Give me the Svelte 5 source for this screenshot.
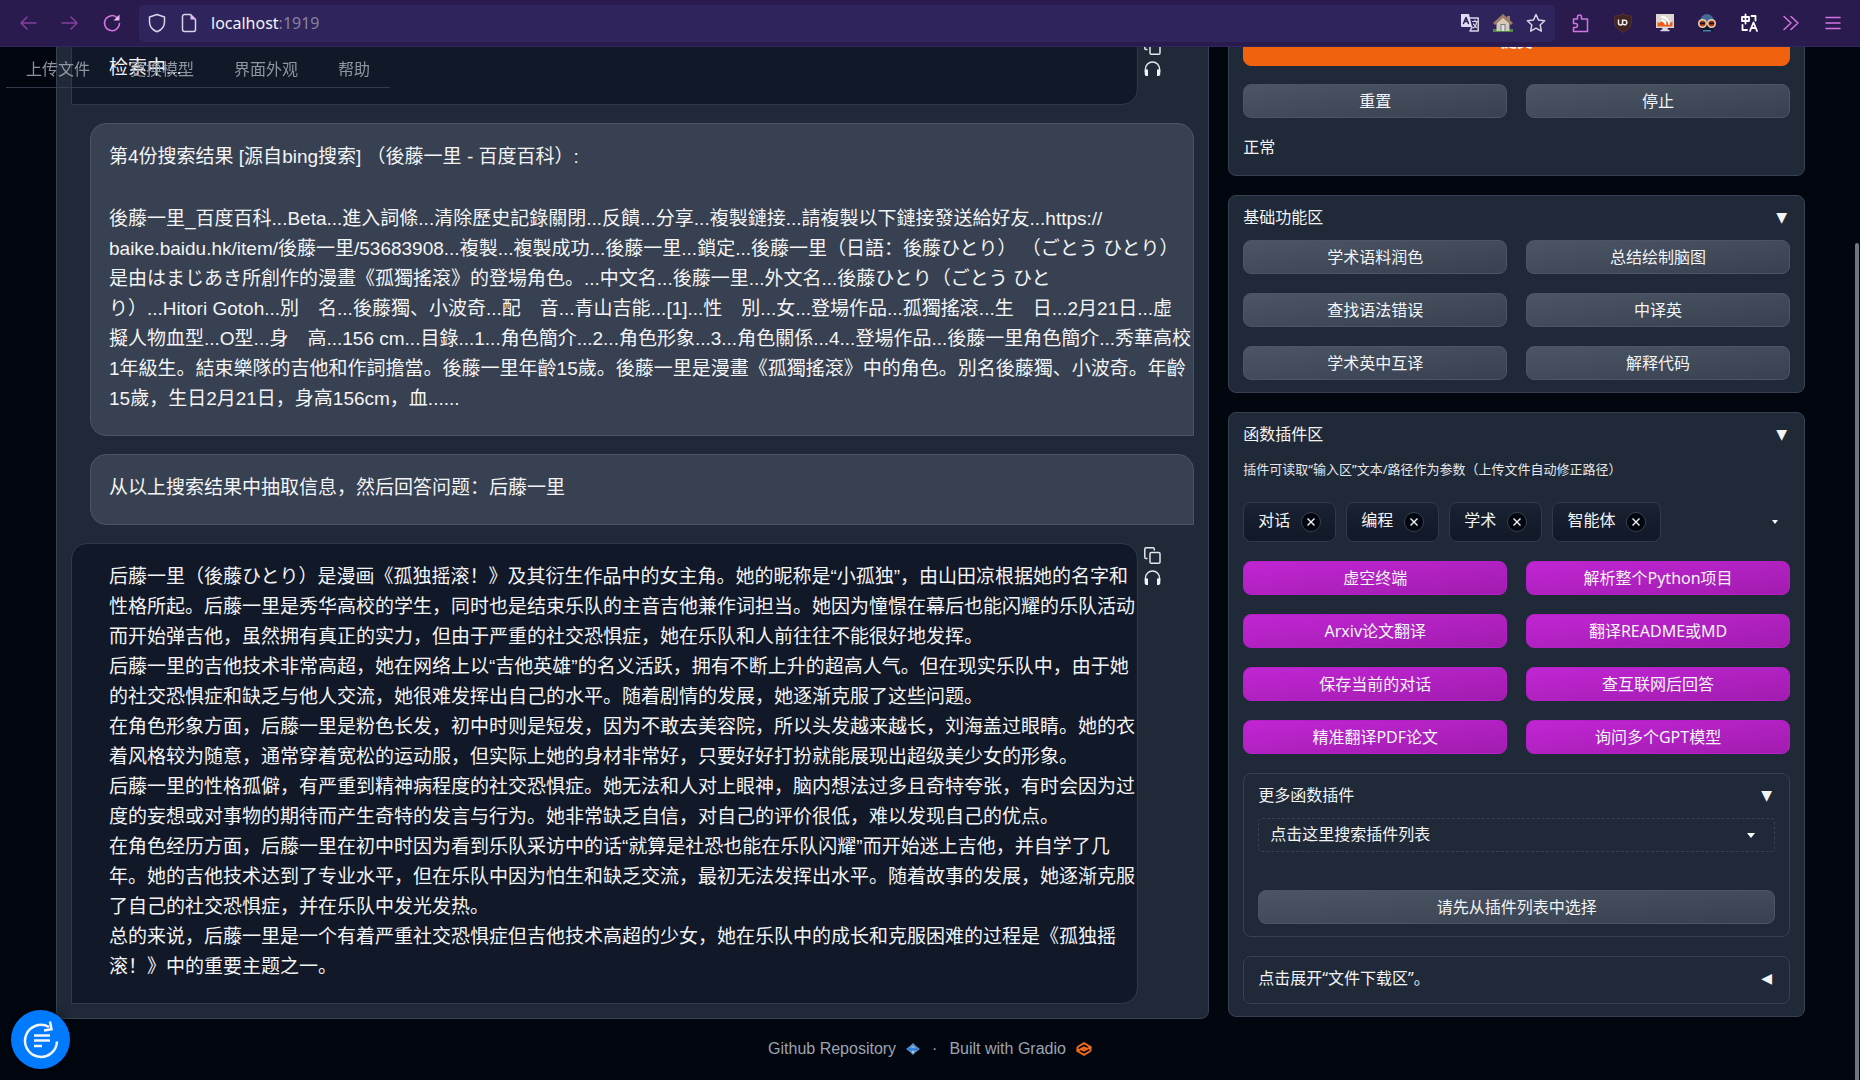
<script lang="ts">
  type Message = { role: 'user' | 'bot'; paragraphs: string[] };

  const tabs = ['上传文件', '更换模型', '界面外观', '帮助'];

  const messages: Message[] = [
    { role: 'bot', paragraphs: ['检索中...'] },
    {
      role: 'user',
      paragraphs: [
        '第4份搜索结果 [源自bing搜索] （後藤一里 - 百度百科）:',
        `後藤一里_百度百科...Beta...進入詞條...清除歷史記錄關閉...反饋...分享...複製鏈接...請複製以下鏈接發送給好友...https://
baike.baidu.hk/item/後藤一里/53683908...複製...複製成功...後藤一里...鎖定...後藤一里（日語：後藤ひとり） （ごとう ひとり）
是由はまじあき所創作的漫畫《孤獨搖滾》的登場角色。...中文名...後藤一里...外文名...後藤ひとり（ごとう ひと
り）...Hitori Gotoh...別　名...後藤獨、小波奇...配　音...青山吉能...[1]...性　別...女...登場作品...孤獨搖滾...生　日...2月21日...虛
擬人物血型...O型...身　高...156 cm...目錄...1...角色簡介...2...角色形象...3...角色關係...4...登場作品...後藤一里角色簡介...秀華高校
1年級生。結束樂隊的吉他和作詞擔當。後藤一里年齡15歲。後藤一里是漫畫《孤獨搖滾》中的角色。別名後藤獨、小波奇。年齡
15歲，生日2月21日，身高156cm，血......`,
      ],
    },
    { role: 'user', paragraphs: ['从以上搜索结果中抽取信息，然后回答问题：后藤一里'] },
    {
      role: 'bot',
      paragraphs: [
        `后藤一里（後藤ひとり）是漫画《孤独摇滚！》及其衍生作品中的女主角。她的昵称是“小孤独”，由山田凉根据她的名字和
性格所起。后藤一里是秀华高校的学生，同时也是结束乐队的主音吉他兼作词担当。她因为憧憬在幕后也能闪耀的乐队活动
而开始弹吉他，虽然拥有真正的实力，但由于严重的社交恐惧症，她在乐队和人前往往不能很好地发挥。
后藤一里的吉他技术非常高超，她在网络上以“吉他英雄”的名义活跃，拥有不断上升的超高人气。但在现实乐队中，由于她
的社交恐惧症和缺乏与他人交流，她很难发挥出自己的水平。随着剧情的发展，她逐渐克服了这些问题。
在角色形象方面，后藤一里是粉色长发，初中时则是短发，因为不敢去美容院，所以头发越来越长，刘海盖过眼睛。她的衣
着风格较为随意，通常穿着宽松的运动服，但实际上她的身材非常好，只要好好打扮就能展现出超级美少女的形象。
后藤一里的性格孤僻，有严重到精神病程度的社交恐惧症。她无法和人对上眼神，脑内想法过多且奇特夸张，有时会因为过
度的妄想或对事物的期待而产生奇特的发言与行为。她非常缺乏自信，对自己的评价很低，难以发现自己的优点。
在角色经历方面，后藤一里在初中时因为看到乐队采访中的话“就算是社恐也能在乐队闪耀”而开始迷上吉他，并自学了几
年。她的吉他技术达到了专业水平，但在乐队中因为怕生和缺乏交流，最初无法发挥出水平。随着故事的发展，她逐渐克服
了自己的社交恐惧症，并在乐队中发光发热。
总的来说，后藤一里是一个有着严重社交恐惧症但吉他技术高超的少女，她在乐队中的成长和克服困难的过程是《孤独摇
滚！》中的重要主题之一。`,
      ],
    },
  ];

  const basics = ['学术语料润色', '总结绘制脑图', '查找语法错误', '中译英', '学术英中互译', '解释代码'];
  const plugins = [
    '虚空终端', '解析整个Python项目',
    'Arxiv论文翻译', '翻译README或MD',
    '保存当前的对话', '查互联网后回答',
    '精准翻译PDF论文', '询问多个GPT模型',
  ];

  let groups = $state(['对话', '编程', '学术', '智能体']);
  let url = $state('localhost:1919');
  let search = $state('点击这里搜索插件列表');

  let host = $derived(url.split(':')[0]);
  let port = $derived(url.includes(':') ? ':' + url.split(':')[1] : '');

  function removeGroup(name: string) {
    groups = groups.filter(g => g !== name);
  }
</script>

<div class="browser">
  <div class="nav-buttons">
    <button type="button" class="chrome-btn dim" aria-label="Back">
      <svg width="20" height="20" viewBox="0 0 20 20"><path d="M18 10H3M9 4l-6 6 6 6" /></svg>
    </button>
    <button type="button" class="chrome-btn dim" aria-label="Forward">
      <svg width="20" height="20" viewBox="0 0 20 20"><path d="M2 10h15M11 4l6 6-6 6" /></svg>
    </button>
    <button type="button" class="chrome-btn bright" aria-label="Reload">
      <svg width="20" height="20" viewBox="0 0 20 20"><path d="M17.500 10.500A7.500 7.500 0 1 1 15.500 5" /><path d="M17.500 1.500v6h-6z" class="fill" /></svg>
    </button>
  </div>
  <div class="url-bar">
    <svg width="20" height="20" viewBox="0 0 20 20"><path d="M10 1.500l7.500 2.500v5c0 5-3 8-7.500 9.800C5.500 17 2.500 14 2.500 9V4z" /></svg>
    <svg class="doc" width="18" height="20" viewBox="0 0 18 20"><path d="M2.500 3.500a2 2 0 0 1 2-2h6l5 5v10a2 2 0 0 1-2 2h-9a2 2 0 0 1-2-2z" /><path d="M10.500 1.500v5h5z" class="fill" /></svg>
    <span class="address"><span>{host}</span><span class="port">{port}</span></span>
    <button type="button" class="chrome-btn" aria-label="Translate page">
      <svg width="20" height="20" viewBox="0 0 20 20"><path class="light" d="M1 1h8l3 13H2a1 1 0 0 1-1-1z" stroke="none" /><path d="M9 5h9.200v13H10l2-4" /><path class="ink" d="M3.500 10.500L6 4.500l2.500 6M4.500 8.500h3" /><path d="M12.500 8.500h5M15 7v1.500M13 15c2-1 3.500-3.500 3.500-6M13.500 11l3 3.500" stroke-width="1.200" /></svg>
    </button>
    <button type="button" class="chrome-btn" aria-label="Home">
      <svg width="20" height="20" viewBox="0 0 20 20" stroke="none"><path fill="#4f8a45" d="M0 16h20v3H0z" /><path fill="#d6cbb8" d="M3.500 9L10 3l6.500 6v9h-13z" /><path fill="#9c7b68" d="M10 1L0 10l2 2 8-7 8 7 2-2-3-2.700V3h-3v1.500z" /><path fill="#77777f" d="M7.500 11h5v7h-5z" /><path fill="#dfe2e5" d="M8.500 12h3v6h-3z" /></svg>
    </button>
    <button type="button" class="chrome-btn" aria-label="Bookmark">
      <svg width="20" height="20" viewBox="0 0 20 20"><path d="M10 1.500l2.600 5.600 6 .7-4.400 4.200 1.100 6.200-5.300-3-5.300 3 1.100-6.200L1.400 7.800l6-.7z" /></svg>
    </button>
  </div>
  <div class="extensions">
    <button type="button" class="chrome-btn bright" aria-label="Extensions">
      <svg width="20" height="20" viewBox="0 0 20 20"><path d="M2.500 6h4V4a2 2 0 0 1 4 0v2h6v12.500h-14v-4h2a2 2 0 0 0 0-4h-2z" /></svg>
    </button>
    <button type="button" class="chrome-btn" aria-label="uBlock">
      <svg width="20" height="20" viewBox="0 0 20 20"><path d="M10 .8c3 1.700 5 2.200 8.300 2.200v7c0 4.500-4 7-8.300 9.300C5.700 17 1.700 14.500 1.700 10V3C5 3 7 2.500 10 .8z" fill="#3f241f" stroke="#55323c" stroke-width="1" /><path d="M5.500 7v3a2 2 0 0 0 4 0V7m0 1.500a2.300 2.300 0 1 1 0 2" stroke="#eee" /></svg>
    </button>
    <button type="button" class="chrome-btn" aria-label="Feeds">
      <svg width="20" height="20" viewBox="0 0 20 20"><path d="M1 1h18v14H1z" fill="#dcd6cf" stroke="none" /><path d="M2.500 9v4.500h15V8l-2 2-3-2-3 3-3-3-2 2z" fill="#ee5a18" class="bare" /><path d="M7 4a7 7 0 0 1 7 7M7 7.500a3.500 3.500 0 0 1 3.500 3.500" class="white" /><path d="M8 15h4v2.500H8zM6 17.500h8" fill="#ddd" /></svg>
    </button>
    <button type="button" class="chrome-btn" aria-label="User scripts">
      <svg width="20" height="20" viewBox="0 0 20 20" stroke="none"><path d="M3 9a7 8 0 0 1 14 0z" fill="#446a98" /><path d="M3 10h14l-1 8.500H4z" fill="#101a2c" /><circle cx="5.500" cy="10.500" r="4.500" fill="#e8d4b8" /><circle cx="14.500" cy="10.500" r="4.500" fill="#e8d4b8" /><circle cx="5.500" cy="10.500" r="3" fill="#b53a12" /><circle cx="14.500" cy="10.500" r="3" fill="#b53a12" /><path d="M3 9.500h5v1.800H3zM12 9.500h5v1.800h-5z" fill="#15151f" /><path d="M6 17h8v1.500H6z" fill="#4b80ad" /></svg>
    </button>
    <button type="button" class="chrome-btn" aria-label="Translate">
      <svg width="20" height="20" viewBox="0 0 20 20"><path d="M3 4h7v4H3zM6.500 1.500v9M12.500 3h4v4.500M3.500 12v5H8M11 18l3.500-8.500L18 18M12.200 15h4.600" class="white" /></svg>
    </button>
    <button type="button" class="chrome-btn bright" aria-label="More tools">
      <svg width="20" height="20" viewBox="0 0 20 20"><path d="M3 3.500l7 6.500-7 6.500M10 3.500l7 6.500-7 6.500" /></svg>
    </button>
    <button type="button" class="chrome-btn bright" aria-label="Menu">
      <svg width="20" height="20" viewBox="0 0 20 20"><path d="M3 4.500h14M3 10h14M3 15.500h14" /></svg>
    </button>
  </div>
</div>

<nav class="tabs">
  {#each tabs as tab}
    <button type="button">{tab}</button>
  {/each}
</nav>

<div class="viewport">
  <main>
    <section class="panel chat">
      {#each messages as message}
        <div class="row {message.role}">
          <div class="bubble">
            {#each message.paragraphs as text}
              <p>{text}</p>
            {/each}
          </div>
          {#if message.role === 'bot'}
            <div class="tools">
              <button type="button" aria-label="Copy">
                <svg width="17" height="17" viewBox="0 0 17 17"><path d="M3.500 11.500H2A1.300 1.300 0 0 1 .8 10.200V2A1.300 1.300 0 0 1 2 .8h7A1.300 1.300 0 0 1 10.300 2v1.500" /><rect x="6" y="5.500" width="10" height="10.700" rx="1.300" /></svg>
              </button>
              <button type="button" aria-label="Read aloud">
                <svg width="17" height="17" viewBox="0 0 17 17"><path d="M1.500 12V9a7 7 0 0 1 14 0v3" /><path d="M.7 9.500H4v6.500H2.500A1.800 1.800 0 0 1 .7 14.200zM16.300 9.500H13v6.500h1.500a1.800 1.800 0 0 0 1.800-1.800z" class="fill" /></svg>
              </button>
            </div>
          {/if}
        </div>
      {/each}
    </section>

    <div class="side">
      <section class="panel control">
        <button type="button" class="btn primary">提交</button>
        <div class="grid">
          <button type="button" class="btn">重置</button>
          <button type="button" class="btn">停止</button>
        </div>
        <p class="status">正常</p>
      </section>

      <section class="panel">
        <button type="button" class="panel-head"><span>基础功能区</span><span class="arrow">▼</span></button>
        <div class="grid">
          {#each basics as name}
            <button type="button" class="btn">{name}</button>
          {/each}
        </div>
      </section>

      <section class="panel">
        <button type="button" class="panel-head"><span>函数插件区</span><span class="arrow">▼</span></button>
        <p class="hint">插件可读取“输入区”文本/路径作为参数（上传文件自动修正路径）</p>
        <div class="chips">
          {#each groups as group (group)}
            <span class="chip">
              <span class="chip-label">{group}</span>
              <button type="button" aria-label="移除{group}" onclick={() => removeGroup(group)}>
                <svg width="8" height="8" viewBox="0 0 8 8"><path d="M.5.5l7 7M7.500.5l-7 7" /></svg>
              </button>
            </span>
          {/each}
          <span class="caret small"></span>
        </div>
        <div class="grid">
          {#each plugins as name}
            <button type="button" class="btn plugin">{name}</button>
          {/each}
        </div>

        <div class="panel nested">
          <button type="button" class="panel-head"><span>更多函数插件</span><span class="arrow">▼</span></button>
          <div class="search">
            <input type="text" aria-label="搜索插件列表" bind:value={search} />
            <span class="caret"></span>
          </div>
          <button type="button" class="btn wide">请先从插件列表中选择</button>
        </div>

        <div class="panel nested closed">
          <button type="button" class="panel-head"><span>点击展开“文件下载区”。</span><span class="arrow">◀</span></button>
        </div>
      </section>
    </div>
  </main>

  <footer>
    <a href="#repo">Github Repository
      <svg width="14" height="12" viewBox="0 0 14 12"><path d="M7 0l3 3 4 3-4 3-3 3-3-3-4-3 4-3z" fill="#5b93c7" /><path d="M2 5.500h10v1.500H2z" fill="#2477e8" /><path d="M5.500 3.500h3v1h-3zM6 8h2v2H6z" fill="#a7cbe6" /></svg>
    </a>
    <span>·</span>
    <a href="#gradio">Built with Gradio
      <svg width="16" height="14" viewBox="0 0 16 14" fill="none" stroke="#f26a1b" stroke-width="2"><path d="M1.500 5L8 1.200 14.500 5 8 8.600 5 7M14.500 9L8 12.800 1.500 9 8 5.400 11 7M1.500 5v4M14.500 5v4" /></svg>
    </a>
  </footer>
</div>

<button type="button" class="float" aria-label="Conversation">
  <svg width="36" height="38" viewBox="0 0 36 38"><path d="M34 20.500A16 16 0 1 1 26 6" /><path d="M27 .5l1.500 7.800-7.500 1.200" /><path d="M11 14.500h16M11 19.500h16M11 25h8" /></svg>
</button>
<div class="scrollbar"></div>

<style>
  :global(body) {
    background: #02060f;
    overflow: hidden;
  }
  button, input {
    font: inherit;
    color: inherit;
    border: none;
    background: none;
    padding: 0;
    margin: 0;
  }
  button { cursor: pointer; }
  p { margin: 0; }

  .browser, .tabs, .viewport {
    font-family: "Noto Sans", "Noto Sans CJK SC", sans-serif;
    font-size: 16px;
    line-height: 24px;
    color: #f3f4f6;
  }

  /* browser toolbar */
  .browser {
    position: relative;
    z-index: 2;
    display: flex;
    align-items: center;
    box-sizing: border-box;
    height: 47px;
    padding: 0 17px;
    background: #2a1b4e;
    border-bottom: 1px solid #33265f;
  }
  .nav-buttons { display: flex; gap: 22px; width: 121px; padding-left: 1px; }
  .browser svg {
    display: block;
    flex-shrink: 0;
    fill: none;
    stroke: #d9d4e6;
    stroke-width: 1.5;
    stroke-linejoin: round;
    stroke-linecap: round;
  }
  .browser .dim svg { stroke: #84409c; }
  .browser .bright svg { stroke: #d474e2; }
  .browser .fill { fill: #e6b8f0; stroke: none; }
  .browser .light { fill: #e4d9f2; }
  .browser .ink { stroke: #2b2152; }
  .browser .bare { stroke: none; }
  .browser .white { stroke: #fff; stroke-width: 1.8; }
  .browser svg[stroke="none"] { stroke: none; }
  .chrome-btn { flex-shrink: 0; }
  .url-bar {
    flex: 1;
    display: flex;
    align-items: center;
    gap: 13px;
    box-sizing: border-box;
    height: 37px;
    padding: 0 9px 0 8px;
    border-radius: 5px;
    background: #2f255c;
  }
  .address { flex: 1; line-height: 22px; }
  .port { color: #85829f; }
  .extensions { display: flex; gap: 22px; padding-left: 16px; }

  /* app tabs, laid over the scrolled page */
  .tabs {
    position: fixed;
    top: 47px;
    left: 6px;
    z-index: 1;
    display: flex;
    box-sizing: border-box;
    height: 41px;
    border-bottom: 1px solid #374151;
    color: #9ca3af;
    opacity: 0.9;
  }
  .tabs button { padding: 3px 20px 0; }

  .viewport {
    height: calc(100vh - 47px);
    overflow: hidden;
  }
  main {
    display: grid;
    grid-template-columns: 2fr 1fr;
    align-items: start;
    gap: 19px;
    margin-top: -46px;
    padding: 0 55px 0 56px;
  }
  .panel {
    box-sizing: border-box;
    padding: 9px 14px 12px;
    border: 1px solid #374151;
    border-radius: 8px;
    background: #1f2937;
  }

  /* conversation */
  .chat {
    min-width: 0;
    display: flex;
    flex-direction: column;
    gap: 18px;
    padding: 32px 14px 14px;
    font-family: "Liberation Sans", "Noto Sans CJK SC", sans-serif;
    font-size: 19px;
    line-height: 30px;
  }
  .row { display: flex; }
  .row.user { padding-left: 19px; }
  .bubble {
    flex: 1;
    min-width: 0;
    box-sizing: border-box;
    padding: 18px 0 21px 18px;
    border: 1px solid #4b5563;
    border-radius: 16px 16px 0 16px;
    background: #374151;
    white-space: pre-wrap;
  }
  .bot .bubble {
    padding-left: 37px;
    border-color: #2f3a4b;
    border-radius: 16px 16px 16px 0;
    background: #111827;
  }
  .bubble p + p { margin-top: 32px; }
  .tools {
    display: flex;
    flex-direction: column;
    gap: 5px;
    width: 50px;
    padding: 4px 0 0 6px;
  }
  .tools button { width: 17px; height: 17px; }
  .tools svg {
    display: block;
    fill: none;
    stroke: #e5e7eb;
    stroke-width: 1.5;
  }
  .tools .fill { fill: #f3f4f6; stroke: none; }

  /* right column */
  .side {
    min-width: 0;
    display: flex;
    flex-direction: column;
    gap: 19px;
  }
  .control { padding: 14px 14px 16px; }
  .grid {
    display: grid;
    grid-template-columns: 1fr 1fr;
    gap: 19px;
  }
  .btn {
    box-sizing: border-box;
    height: 34px;
    border: 1px solid #4b5563;
    border-radius: 8px;
    background: linear-gradient(to bottom right, #4b5563, #374151);
  }
  .primary {
    width: 100%;
    height: 50px;
    margin-bottom: 18px;
    border-color: #f1620f;
    background: #f1620f;
    font-weight: 600;
  }
  .plugin {
    border-color: #b41fc6;
    background: linear-gradient(to bottom right, #c026d3, #a21caf);
  }
  .status { margin-top: 17px; }
  .panel-head {
    display: flex;
    justify-content: space-between;
    width: 100%;
    margin-bottom: 11px;
    text-align: left;
  }
  .arrow {
    padding-right: 3px;
    font-family: "DejaVu Sans", sans-serif;
    font-size: 14px;
  }
  .hint {
    margin-top: 13px;
    font-size: 13px;
    line-height: 20px;
    color: #e5e7eb;
  }
  .chips {
    display: flex;
    align-items: center;
    gap: 10px;
    margin: 23px 0 19px;
    padding-right: 12px;
  }
  .chip {
    display: flex;
    align-items: center;
    gap: 11px;
    box-sizing: border-box;
    height: 40px;
    padding: 0 14px;
    border: 1px solid #2f3a4b;
    border-radius: 8px;
    background: linear-gradient(#1a2332, #111827);
  }
  .chip-label { padding-bottom: 4px; }
  .chip button {
    display: grid;
    place-items: center;
    box-sizing: border-box;
    width: 20px;
    height: 20px;
    border: 1px solid #374151;
    border-radius: 50%;
    background: #02060f;
  }
  .chip svg { stroke: #f3f4f6; stroke-width: 1.4; }
  .caret {
    margin-left: auto;
    border: 4px solid transparent;
    border-top: 5px solid #fff;
    border-bottom: none;
  }
  .caret.small { border-width: 4px 3px 0; }
  .nested { margin-top: 19px; }
  .closed { padding: 9px 14px 13px; }
  .closed .panel-head { margin: 0; }
  .search {
    display: flex;
    align-items: center;
    box-sizing: border-box;
    height: 34px;
    margin-bottom: 38px;
    padding: 0 19px 0 11px;
    border: 1px dashed #374151;
    border-radius: 4px;
  }
  .search input { flex: 1; padding-bottom: 2px; outline: none; }
  .wide { width: 100%; }

  footer {
    display: flex;
    justify-content: center;
    align-items: center;
    gap: 12px;
    margin-top: 18px;
    font-family: "Liberation Sans", sans-serif;
    color: #9ca3af;
  }
  footer a {
    display: flex;
    align-items: center;
    gap: 10px;
    color: inherit;
    text-decoration: none;
  }

  .float {
    position: fixed;
    left: 11px;
    bottom: 11px;
    z-index: 2;
    display: grid;
    place-items: center;
    width: 59px;
    height: 59px;
    border-radius: 50%;
    background: #007bff;
    box-shadow: 0 0 8px rgba(0, 0, 0, 0.5);
  }
  .float svg {
    fill: none;
    stroke: #f3f4f6;
    stroke-width: 2.5;
  }
  .scrollbar {
    position: fixed;
    top: 243px;
    right: 1px;
    bottom: 0;
    z-index: 1;
    width: 4px;
    border-radius: 2px 2px 0 0;
    background: #71757f;
  }
</style>
